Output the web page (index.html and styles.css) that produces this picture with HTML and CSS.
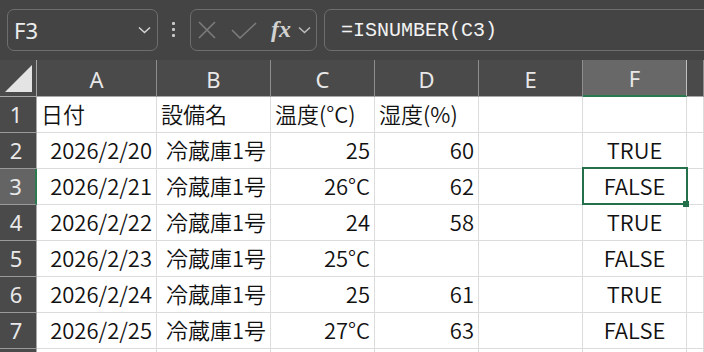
FILE: index.html
```html
<!DOCTYPE html>
<html lang="ja">
<head>
<meta charset="utf-8">
<link rel="stylesheet" href="styles.css">
</head>
<body>
<div class="toolbar">
  <div class="namebox">
    <span class="name">F3</span>
    <svg class="chev" width="13" height="8" viewBox="0 0 13 8"><path d="M1 1.5 L6.5 6.5 L12 1.5" fill="none" stroke="#d4d4d4" stroke-width="1.5"/></svg>
  </div>
  <div class="grip"><i></i><i></i><i></i></div>
  <div class="fxbox">
    <svg class="ico-x" width="18" height="18" viewBox="0 0 18 18"><path d="M1 1 L17 17 M17 1 L1 17" fill="none" stroke="#7c7c7c" stroke-width="1.6"/></svg>
    <svg class="ico-ok" width="26" height="17" viewBox="0 0 26 17"><path d="M1 8 L9 16 L25 1" fill="none" stroke="#7c7c7c" stroke-width="1.6"/></svg>
    <span class="fx">fx</span>
    <svg class="chev2" width="13" height="8" viewBox="0 0 13 8"><path d="M1 1.5 L6.5 6.5 L12 1.5" fill="none" stroke="#bdbdbd" stroke-width="1.5"/></svg>
  </div>
  <div class="formula">=ISNUMBER(C3)</div>
</div>
<div class="sheet">
  <div class="corner"><svg width="28" height="28" viewBox="0 0 28 28"><path d="M0 27 L27 0 L27 27 Z" fill="#e4e4e4"/></svg></div>
  <div class="ch">A</div><div class="ch">B</div><div class="ch">C</div><div class="ch">D</div><div class="ch">E</div><div class="ch on">F</div><div class="ch"></div>

  <div class="rh">1</div>
  <div class="c">日付</div><div class="c">設備名</div><div class="c">温度(°C)</div><div class="c">湿度(%)</div><div class="c"></div><div class="c"></div><div class="c"></div>

  <div class="rh">2</div>
  <div class="c r">2026/2/20</div><div class="c r">冷蔵庫1号</div><div class="c r">25</div><div class="c r">60</div><div class="c"></div><div class="c m">TRUE</div><div class="c"></div>

  <div class="rh on">3</div>
  <div class="c r">2026/2/21</div><div class="c r">冷蔵庫1号</div><div class="c r">26°C</div><div class="c r">62</div><div class="c"></div><div class="c m sel">FALSE</div><div class="c"></div>

  <div class="rh">4</div>
  <div class="c r">2026/2/22</div><div class="c r">冷蔵庫1号</div><div class="c r">24</div><div class="c r">58</div><div class="c"></div><div class="c m">TRUE</div><div class="c"></div>

  <div class="rh">5</div>
  <div class="c r">2026/2/23</div><div class="c r">冷蔵庫1号</div><div class="c r">25°C</div><div class="c r"></div><div class="c"></div><div class="c m">FALSE</div><div class="c"></div>

  <div class="rh">6</div>
  <div class="c r">2026/2/24</div><div class="c r">冷蔵庫1号</div><div class="c r">25</div><div class="c r">61</div><div class="c"></div><div class="c m">TRUE</div><div class="c"></div>

  <div class="rh">7</div>
  <div class="c r">2026/2/25</div><div class="c r">冷蔵庫1号</div><div class="c r">27°C</div><div class="c r">63</div><div class="c"></div><div class="c m">FALSE</div><div class="c"></div>

  <div class="rh"></div>
  <div class="c"></div><div class="c"></div><div class="c"></div><div class="c"></div><div class="c"></div><div class="c"></div><div class="c"></div>
</div>
</body>
</html>
```

FILE: styles.css
```css
* { box-sizing: border-box; }
html, body { margin: 0; padding: 0; }
body {
  width: 704px;
  height: 352px;
  overflow: hidden;
  background: #444444;
  font-family: "Noto Sans", "Noto Sans CJK JP", sans-serif;
}

/* toolbar */
.toolbar {
  display: flex;
  align-items: flex-start;
  height: 60px;
  padding: 9px 0 0 7px;
  background: #444444;
  overflow: hidden;
}
.namebox {
  width: 151px;
  height: 42px;
  border: 1px solid #6e6e6e;
  border-radius: 7px;
  display: flex;
  align-items: center;
  justify-content: space-between;
  padding: 0 6px 0 6px;
  flex: none;
}
.name {
  color: #ececec;
  font-size: 22px;
  line-height: 1;
}
.grip {
  flex: none;
  width: 4px;
  margin: 13px 14px 0 14px;
  display: flex;
  flex-direction: column;
  gap: 3px;
}
.grip i {
  display: block;
  width: 3px;
  height: 3px;
  border-radius: 1px;
  background: #c9c9c9;
}
.fxbox {
  flex: none;
  width: 127px;
  height: 42px;
  border: 1px solid #6e6e6e;
  border-radius: 7px;
  display: flex;
  align-items: center;
  padding-left: 7px;
}
.ico-x { margin-right: 15px; }
.ico-ok { margin-right: 14px; margin-top: 1px; }
.fx {
  font-family: "Liberation Serif", serif;
  font-style: italic;
  font-weight: bold;
  font-size: 24px;
  color: #d2d2d2;
  line-height: 1;
  margin-right: 7px;
  margin-top: -2px;
}
.formula {
  flex: 1 0 auto;
  margin-left: 7px;
  margin-right: -12px;
  height: 42px;
  border: 1px solid #6e6e6e;
  border-radius: 7px;
  display: flex;
  align-items: center;
  padding-left: 16px;
  font-family: "Liberation Mono", "DejaVu Sans Mono", monospace;
  font-size: 20px;
  color: #f2f2f2;
}

/* sheet grid */
.sheet {
  display: grid;
  grid-template-columns: 37px 120px 114px 104px 104px 104px 104px 1fr;
  grid-template-rows: 37px;
  grid-auto-rows: 36px;
  height: 292px;
  overflow: hidden;
}
.corner {
  background: #4a4a4a;
  border-right: 1px solid #a8a8a8;
  border-bottom: 1px solid #a8a8a8;
  display: flex;
  align-items: flex-end;
  justify-content: flex-end;
  padding: 0 3px 3px 0;
}
.corner svg { display: block; }
.ch {
  background: #4a4a4a;
  border-right: 1px solid #8e8e8e;
  border-bottom: 1px solid #a8a8a8;
  color: #e8e8e8;
  font-size: 22px;
  display: flex;
  align-items: center;
  justify-content: center;
  padding-top: 1px;
}
.ch.on {
  background: #686868;
  border-right-color: #c0c0c0;
  border-bottom: 2px solid #2a7a50;
}
.rh {
  background: #4a4a4a;
  border-right: 1px solid #a8a8a8;
  border-bottom: 1px solid #9a9a9a;
  color: #e8e8e8;
  font-size: 22px;
  display: flex;
  align-items: center;
  justify-content: center;
  padding: 0 4px 2px 0;
}
.rh.on {
  background: #646464;
  border-right: 2px solid #2a7a50;
}
.c {
  background: #ffffff;
  border-right: 1px solid #dcdcdc;
  border-bottom: 1px solid #dcdcdc;
  color: #111111;
  font-family: "Noto Sans CJK JP", sans-serif;
  font-weight: 350;
  font-size: 22px;
  display: flex;
  align-items: center;
  padding: 0 4px 4px 4px;
  white-space: nowrap;
}
.c.r { justify-content: flex-end; }
.c.m { justify-content: center; }
.sel { position: relative; }
.sel::before {
  content: "";
  position: absolute;
  left: -1px;
  top: -2px;
  right: -2px;
  bottom: -1px;
  border: 2px solid #23704a;
}
.sel::after {
  content: "";
  position: absolute;
  right: -3px;
  bottom: -3px;
  width: 6px;
  height: 6px;
  background: #23704a;
}
```
